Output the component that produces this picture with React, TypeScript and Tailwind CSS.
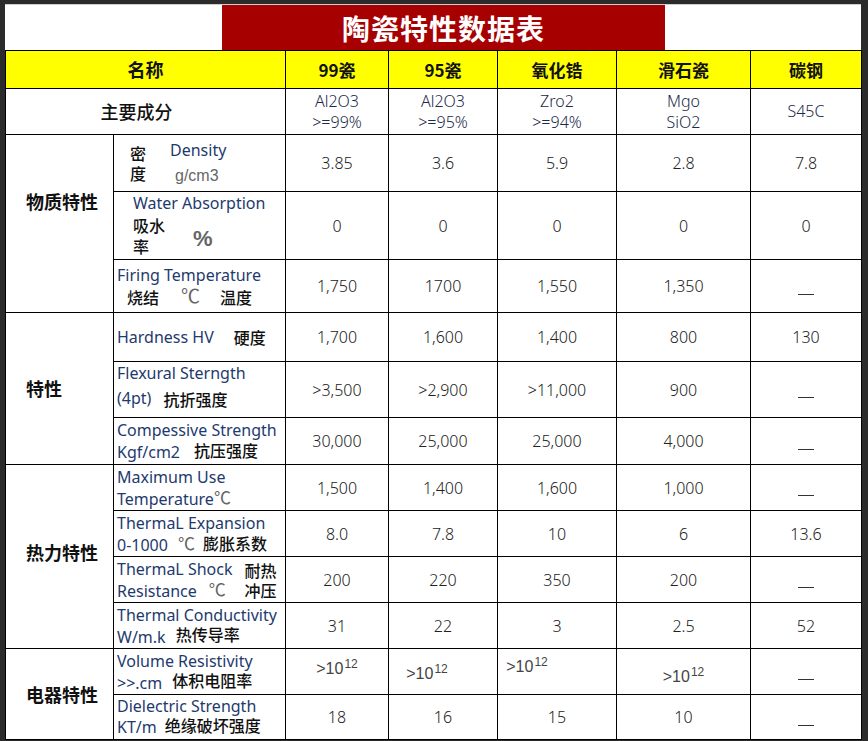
const EN = "font-['Noto_Sans','Noto_Sans_CJK_SC',sans-serif] text-[16px] text-[#1e3a6e] font-normal";
const ZH = "font-['Noto_Sans_CJK_SC',sans-serif] text-[16px] text-[#111] font-medium";
const GR = "font-['Liberation_Sans','Noto_Sans_CJK_SC',sans-serif] text-[#666]";

function Dash() {
  return <span className="inline-block w-[16px] h-px bg-[#333] mt-[22px]" />;
}

function Pow({ cls = "" }: { cls?: string }) {
  return (
    <span className={`font-['Liberation_Sans',sans-serif] text-[16px] leading-none text-[#444] ${cls}`}>
      &gt;10<span className="text-[12px] relative top-[-6px] ml-px">12</span>
    </span>
  );
}

type Row = {
  h: string;
  label: React.ReactNode;
  vals: React.ReactNode[];
};

const rows: Row[] = [
  {
    h: "h-[57px]",
    label: (
      <div className="flex items-center pl-[13px]">
        <div className={`${ZH} flex flex-col leading-[20px]`}>
          <span>密</span>
          <span>度</span>
        </div>
        <div className="flex flex-col ml-[24px] leading-[26px]">
          <span className={EN}>Density</span>
          <span className={`${GR} text-[16px] pl-[5px]`}>g/cm3</span>
        </div>
      </div>
    ),
    vals: ["3.85", "3.6", "5.9", "2.8", "7.8"],
  },
  {
    h: "h-[68px]",
    label: (
      <div className="flex flex-col pl-[16px]">
        <span className={`${EN} leading-[24px] mt-[-4px]`}>Water Absorption</span>
        <div className="flex items-center">
          <div className={`${ZH} flex flex-col leading-[21px]`}>
            <span>吸水</span>
            <span>率</span>
          </div>
          <span className={`${GR} text-[22px] font-bold ml-[28px] mt-[6px]`}>%</span>
        </div>
      </div>
    ),
    vals: ["0", "0", "0", "0", "0"],
  },
  {
    h: "h-[53px]",
    label: (
      <div className="flex flex-col">
        <span className={`${EN} leading-[22px]`}>Firing Temperature</span>
        <div className="flex items-center pl-[10px] leading-[22px]">
          <span className={ZH}>烧结</span>
          <span className={`${GR} text-[19px] ml-[22px]`}>℃</span>
          <span className={`${ZH} ml-[20px]`}>温度</span>
        </div>
      </div>
    ),
    vals: ["1,750", "1700", "1,550", "1,350", <Dash />],
  },
  {
    h: "h-[49px]",
    label: (
      <div className="flex items-center">
        <span className={EN}>Hardness HV</span>
        <span className={`${ZH} ml-[20px]`}>硬度</span>
      </div>
    ),
    vals: ["1,700", "1,600", "1,400", "800", "130"],
  },
  {
    h: "h-[56px]",
    label: (
      <div className="flex flex-col leading-[23px] mt-[-6px]">
        <span className={EN}>Flexural Sterngth</span>
        <div className="flex items-center">
          <span className={EN}>(4pt)</span>
          <span className={`${ZH} ml-[12px] mt-[3px]`}>抗折强度</span>
        </div>
      </div>
    ),
    vals: [">3,500", ">2,900", ">11,000", "900", <Dash />],
  },
  {
    h: "h-[47px]",
    label: (
      <div className="flex flex-col leading-[22px]">
        <span className={EN}>Compessive Strength</span>
        <div className="flex items-center">
          <span className={EN}>Kgf/cm2</span>
          <span className={`${ZH} ml-[14px] mt-[-4px]`}>抗压强度</span>
        </div>
      </div>
    ),
    vals: ["30,000", "25,000", "25,000", "4,000", <Dash />],
  },
  {
    h: "h-[46px]",
    label: (
      <div className="flex flex-col leading-[22px]">
        <span className={EN}>Maximum Use</span>
        <div className="flex items-center">
          <span className={EN}>Temperature</span>
          <span className={`${GR} text-[17px]`}>℃</span>
        </div>
      </div>
    ),
    vals: ["1,500", "1,400", "1,600", "1,000", <Dash />],
  },
  {
    h: "h-[46px]",
    label: (
      <div className="flex flex-col leading-[22px]">
        <span className={EN}>ThermaL Expansion</span>
        <div className="flex items-center">
          <span className={EN}>0-1000</span>
          <span className={`${GR} text-[17px] ml-[10px]`}>℃</span>
          <span className={`${ZH} ml-[8px] mt-[-4px]`}>膨胀系数</span>
        </div>
      </div>
    ),
    vals: ["8.0", "7.8", "10", "6", "13.6"],
  },
  {
    h: "h-[46px]",
    label: (
      <div className="flex items-center">
        <div className="flex flex-col leading-[22px]">
          <span className={EN}>ThermaL Shock</span>
          <div className="flex items-center">
            <span className={EN}>Resistance</span>
            <span className={`${GR} text-[17px] ml-[12px]`}>℃</span>
          </div>
        </div>
        <div className={`${ZH} flex flex-col leading-[20px] ml-[12px]`}>
          <span>耐热</span>
          <span>冲压</span>
        </div>
      </div>
    ),
    vals: ["200", "220", "350", "200", <Dash />],
  },
  {
    h: "h-[46px]",
    label: (
      <div className="flex flex-col leading-[22px]">
        <span className={EN}>Thermal Conductivity</span>
        <div className="flex items-center">
          <span className={EN}>W/m.k</span>
          <span className={`${ZH} ml-[10px] mt-[-6px]`}>热传导率</span>
        </div>
      </div>
    ),
    vals: ["31", "22", "3", "2.5", "52"],
  },
  {
    h: "h-[46px]",
    label: (
      <div className="flex flex-col leading-[22px]">
        <span className={EN}>Volume Resistivity</span>
        <div className="flex items-center">
          <span className={EN}>&gt;&gt;.cm</span>
          <span className={`${ZH} ml-[10px] mt-[-6px]`}>体积电阻率</span>
        </div>
      </div>
    ),
    vals: [
      <Pow cls="relative top-[-4px]" />,
      <Pow cls="relative top-[1px] left-[-16px]" />,
      <Pow cls="relative top-[-6px] left-[-30px]" />,
      <Pow cls="relative top-[4px]" />,
      <Dash />,
    ],
  },
  {
    h: "h-[45px]",
    label: (
      <div className="flex flex-col leading-[21px]">
        <span className={EN}>Dielectric Strength</span>
        <div className="flex items-center">
          <span className={EN}>KT/m</span>
          <span className={`${ZH} ml-[8px] mt-[-4px]`}>绝缘破坏强度</span>
        </div>
      </div>
    ),
    vals: ["18", "16", "15", "10", <Dash />],
  },
];

const groups: { label: string; start: number; span: number; extra?: string }[] = [
  { label: "物质特性", start: 0, span: 3, extra: "pb-[44px]" },
  { label: "特性", start: 3, span: 3 },
  { label: "热力特性", start: 6, span: 4, extra: "pb-[8px]" },
  { label: "电器特性", start: 10, span: 2 },
];

const cell = "border border-black p-0";
const val = "font-['Noto_Sans','Noto_Sans_CJK_SC',sans-serif] text-[16px] text-[#222] font-light text-center align-middle";

export default function App() {
  return (
    <div className="w-[868px] h-[741px] bg-[#2b2b2b] pt-[4px] pl-[5px] overflow-hidden">
      <div className="w-[856px] bg-white border-t border-[#cfcfcf]">
        {/* title */}
        <div className="h-[45px] flex">
          <div className="ml-[217px] w-[443px] h-full bg-[#a70000] flex items-center justify-center">
            <span className="font-['Noto_Sans_CJK_SC',sans-serif] font-bold text-white text-[28px] tracking-[1px] leading-none">
              陶瓷特性数据表
            </span>
          </div>
        </div>

        <table className="table-fixed border-collapse w-[856px]">
          <colgroup>
            <col className="w-[108px]" />
            <col className="w-[172px]" />
            <col className="w-[103px]" />
            <col className="w-[109px]" />
            <col className="w-[119px]" />
            <col className="w-[134px]" />
            <col className="w-[111px]" />
          </colgroup>
          <tbody>
            <tr className="h-[38px] bg-[#ffff00]">
              <td colSpan={2} className={`${cell} text-center`}>
                <span className="font-['Noto_Sans_CJK_SC',sans-serif] font-bold text-[18px] text-[#111]">名称</span>
              </td>
              {["99瓷", "95瓷", "氧化锆", "滑石瓷", "碳钢"].map((t) => (
                <td key={t} className={`${cell} text-center`}>
                  <span className="font-['Noto_Sans_CJK_SC',sans-serif] font-bold text-[17px] text-[#111]">{t}</span>
                </td>
              ))}
            </tr>
            <tr className="h-[46px]">
              <td colSpan={2} className={`${cell} text-center pr-[18px]`}>
                <span className="font-['Noto_Sans_CJK_SC',sans-serif] font-medium text-[18px] text-[#111]">主要成分</span>
              </td>
              {[
                ["Al2O3", ">=99%"],
                ["Al2O3", ">=95%"],
                ["Zro2", ">=94%"],
                ["Mgo", "SiO2"],
                ["S45C"],
              ].map((lines, i) => (
                <td key={i} className={`${cell} ${val}`}>
                  <div className="flex flex-col leading-[21px] text-[#1b2a4a]">
                    {lines.map((l) => (
                      <span key={l}>{l}</span>
                    ))}
                  </div>
                </td>
              ))}
            </tr>
            {rows.map((r, i) => {
              const g = groups.find((x) => x.start === i);
              return (
                <tr key={i} className={r.h}>
                  {g && (
                    <td rowSpan={g.span} className={`${cell} align-middle pl-[20px] ${g.extra ?? ""}`}>
                      <span className="font-['Noto_Sans_CJK_SC',sans-serif] font-bold text-[18px] text-[#111]">
                        {g.label}
                      </span>
                    </td>
                  )}
                  <td className={`${cell} pl-[3px] align-middle`}>{r.label}</td>
                  {r.vals.map((v, j) => (
                    <td key={j} className={`${cell} ${val}`}>
                      {v}
                    </td>
                  ))}
                </tr>
              );
            })}
          </tbody>
        </table>
      </div>
    </div>
  );
}
